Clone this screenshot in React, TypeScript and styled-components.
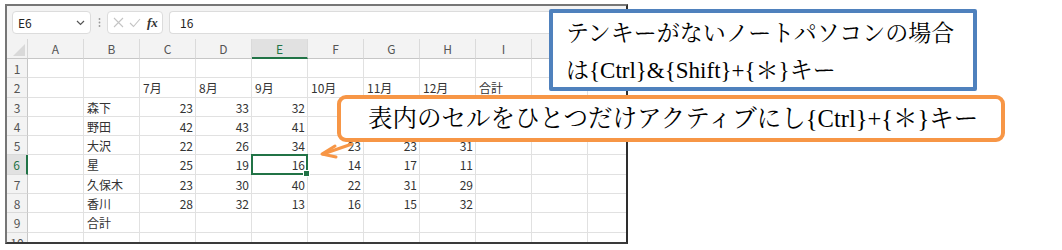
import React from "react";
import styled, { createGlobalStyle, css } from "styled-components";

const GlobalStyle = createGlobalStyle`
  html, body { margin: 0; padding: 0; background: #ffffff; }
  * { box-sizing: border-box; }
`;

const GREEN = "#217346";
const CELL_FONT = `"Noto Sans CJK JP", "Noto Sans", sans-serif`;
const CALLOUT_FONT = `"Liberation Serif", "Noto Serif CJK JP", "Noto Sans CJK JP", serif`;

const Page = styled.div`
  position: relative;
  width: 1062px;
  height: 250px;
  overflow: hidden;
  padding: 4px 0 0 5px;
  background: #fff;
`;

const Frame = styled.div`
  width: 623px;
  height: 240px;
  border: 2px solid;
  border-color: #767676 #2e2e2e #3a3a3a #767676;
  overflow: hidden;
  display: flex;
  flex-direction: column;
  background: #fff;
`;

const FormulaBar = styled.div`
  height: 33px;
  flex: 0 0 33px;
  background: #f3f3f3;
  display: flex;
  align-items: center;
  padding: 0 0 0 5px;
  font-family: ${CELL_FONT};
  font-size: 12px;
  color: #222;
`;

const Box = styled.div`
  height: 23px;
  background: #fff;
  border: 1px solid #dcdcdc;
  border-radius: 4px;
  display: flex;
  align-items: center;
`;

const NameBox = styled(Box)`
  width: 79px;
  padding: 0 5px 0 5px;
  justify-content: space-between;
`;

const Grip = styled.div`
  width: 16px;
  display: flex;
  justify-content: center;
`;

const FxBox = styled(Box)`
  width: 56px;
  padding: 0 4px 0 5px;
  gap: 5px;
`;

const FxLabel = styled.span`
  font-family: "Liberation Serif", serif;
  font-style: italic;
  font-weight: bold;
  font-size: 13px;
  color: #333;
  margin-left: 1px;
`;

const InputBox = styled(Box)`
  flex: 1;
  margin-left: 6px;
  padding-left: 10px;
  border-right: none;
  border-radius: 4px 0 0 4px;
`;

const Sheet = styled.div`
  display: grid;
  grid-template-columns: 21px repeat(11, 56px);
  grid-template-rows: 20px 19px 20px 19px 19px 19px 20px 19px 19px 20px 19px;
  font-family: ${CELL_FONT};
  font-size: 12px;
  color: #333;
`;

const Corner = styled.div`
  position: relative;
  background: #f3f3f3;
  border-right: 1px solid #d6d6d6;
  border-bottom: 1px solid #c6c6c6;
  &::after {
    content: "";
    position: absolute;
    right: 2px;
    bottom: 2px;
    width: 0;
    height: 0;
    border-left: 12px solid transparent;
    border-bottom: 12px solid #d9d9d9;
  }
`;

const ColHeader = styled.div<{ $active?: boolean }>`
  display: flex;
  align-items: center;
  justify-content: center;
  background: #f3f3f3;
  border-right: 1px solid #dadada;
  border-bottom: 1px solid #c6c6c6;
  color: #555;
  ${(p) =>
    p.$active &&
    css`
      background: #e1e1e1;
      color: ${GREEN};
      border-bottom: 2px solid ${GREEN};
    `}
`;

const RowHeader = styled.div<{ $active?: boolean }>`
  display: flex;
  align-items: center;
  justify-content: center;
  background: #f3f3f3;
  border-right: 1px solid #c6c6c6;
  border-bottom: 1px solid #dadada;
  color: #555;
  ${(p) =>
    p.$active &&
    css`
      background: #e1e1e1;
      color: ${GREEN};
      border-right: 2px solid ${GREEN};
    `}
`;

const Cell = styled.div<{ $num?: boolean; $selected?: boolean }>`
  position: relative;
  display: flex;
  align-items: center;
  justify-content: ${(p) => (p.$num ? "flex-end" : "flex-start")};
  padding: 0 2px 0 3px;
  border-right: 1px solid #e1e1e1;
  border-bottom: 1px solid #e1e1e1;
  white-space: nowrap;
  ${(p) =>
    p.$selected &&
    css`
      &::after {
        content: "";
        position: absolute;
        left: -1px;
        top: -1px;
        right: -1px;
        bottom: -1px;
        border: 2px solid ${GREEN};
      }
      &::before {
        content: "";
        position: absolute;
        right: -3px;
        bottom: -3px;
        width: 5px;
        height: 5px;
        background: ${GREEN};
        border: 1px solid #fff;
        z-index: 2;
      }
    `}
`;

const Callout = styled.div`
  position: absolute;
  background: #fff;
  font-family: ${CALLOUT_FONT};
  color: #000;
  white-space: nowrap;
`;

const BlueCallout = styled(Callout)`
  left: 549px;
  top: 9px;
  width: 428px;
  height: 82px;
  border: 4px solid #4f81bd;
  border-radius: 2px;
  padding: 2px 0 0 13px;
  font-size: 23px;
  line-height: 37px;
`;

const OrangeCallout = styled(Callout)`
  left: 337px;
  top: 95px;
  width: 668px;
  height: 47px;
  border: 4px solid #f79646;
  border-radius: 9px;
  padding: 0 0 0 27px;
  font-size: 24.5px;
  line-height: 39px;
`;

const Line = styled.div``;

const ArrowSvg = styled.svg`
  position: absolute;
  left: 316px;
  top: 136px;
  overflow: visible;
`;

// J and K headers lie under the blue callout in the reference
const cols = ["A", "B", "C", "D", "E", "F", "G", "H", "I", "", ""];

type Row = (string | number | null)[];
const data: Row[] = [
  [null, null, null, null, null, null, null, null, null, null, null],
  [null, null, "7月", "8月", "9月", "10月", "11月", "12月", "合計", null, null],
  [null, "森下", 23, 33, 32, null, null, null, null, null, null],
  [null, "野田", 42, 43, 41, null, null, null, null, null, null],
  [null, "大沢", 22, 26, 34, 23, 23, 31, null, null, null],
  [null, "星", 25, 19, 16, 14, 17, 11, null, null, null],
  [null, "久保木", 23, 30, 40, 22, 31, 29, null, null, null],
  [null, "香川", 28, 32, 13, 16, 15, 32, null, null, null],
  [null, "合計", null, null, null, null, null, null, null, null, null],
  [null, null, null, null, null, null, null, null, null, null, null],
];

export default function App() {
  return (
    <>
      <GlobalStyle />
      <Page>
        <Frame>
          <FormulaBar>
            <NameBox>
              <span>E6</span>
              <svg width="9" height="6" viewBox="0 0 9 6">
                <polyline points="1,1 4.5,4.5 8,1" fill="none" stroke="#555" strokeWidth="1.2" />
              </svg>
            </NameBox>
            <Grip>
              <svg width="3" height="11" viewBox="0 0 3 11">
                <circle cx="1.5" cy="2" r="0.9" fill="#999" />
                <circle cx="1.5" cy="5.5" r="0.9" fill="#999" />
                <circle cx="1.5" cy="9" r="0.9" fill="#999" />
              </svg>
            </Grip>
            <FxBox>
              <svg width="11" height="11" viewBox="0 0 11 11">
                <path d="M1 1 L10 10 M10 1 L1 10" stroke="#c4c4c4" strokeWidth="1.1" />
              </svg>
              <svg width="12" height="10" viewBox="0 0 12 10">
                <polyline points="1,5 4.5,8.5 11,1" fill="none" stroke="#c4c4c4" strokeWidth="1.1" />
              </svg>
              <FxLabel>fx</FxLabel>
            </FxBox>
            <InputBox>16</InputBox>
          </FormulaBar>
          <Sheet>
            <Corner />
            {cols.map((c, i) => (
              <ColHeader key={i} $active={c === "E"}>
                {c}
              </ColHeader>
            ))}
            {data.map((row, r) => (
              <React.Fragment key={r}>
                <RowHeader $active={r === 5}>{r + 1}</RowHeader>
                {row.map((v, c) => (
                  <Cell key={c} $num={typeof v === "number"} $selected={r === 5 && c === 4}>
                    {v}
                  </Cell>
                ))}
              </React.Fragment>
            ))}
          </Sheet>
        </Frame>

        <ArrowSvg width="40" height="26" viewBox="0 0 40 26">
          <g stroke="#f79646" strokeWidth="3" strokeLinecap="round" strokeLinejoin="round" fill="none">
            <line x1="36" y1="8" x2="7" y2="18" />
            <polyline points="19,10 6,18 20,21" />
          </g>
        </ArrowSvg>

        <BlueCallout>
          <Line>テンキーがないノートパソコンの場合</Line>
          <Line>は{"{Ctrl}&{Shift}+{＊}"}キー</Line>
        </BlueCallout>

        <OrangeCallout>表内のセルをひとつだけアクティブにし{"{Ctrl}+{＊}"}キー</OrangeCallout>
      </Page>
    </>
  );
}
